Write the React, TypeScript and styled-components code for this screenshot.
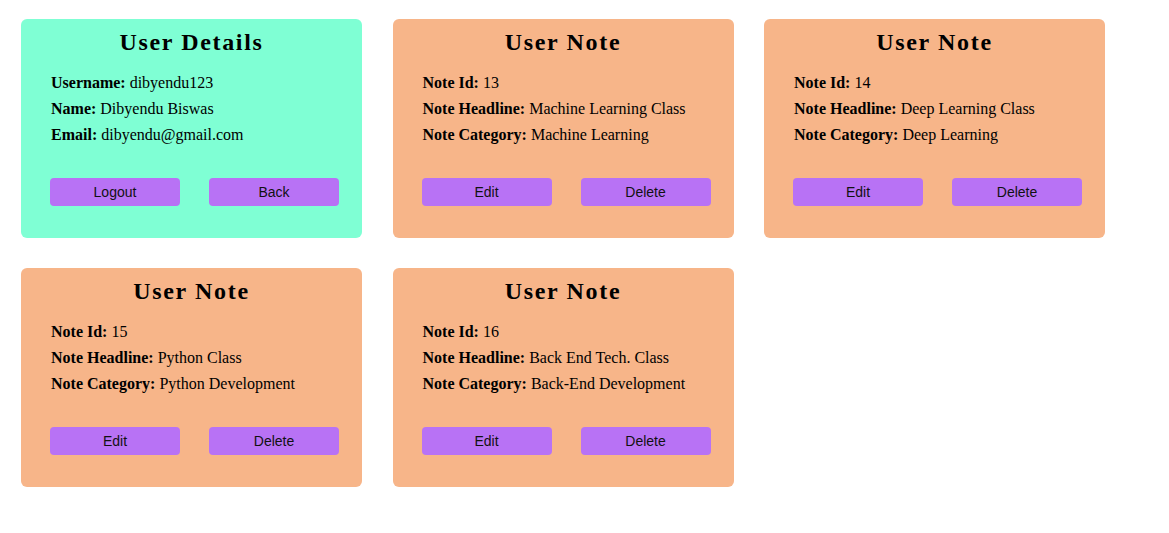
import React from "react";
import styled, { createGlobalStyle } from "styled-components";

const Global = createGlobalStyle`
  html, body { margin: 0; padding: 0; background: #ffffff; }
  body { font-family: "Liberation Serif", "Times New Roman", serif; color: #000; }
`;

const Grid = styled.div`
  display: grid;
  grid-template-columns: repeat(3, 341px);
  column-gap: 30.5px;
  row-gap: 30px;
  padding: 19px 21px;
`;

const Card = styled.div<{ $bg: string }>`
  background: ${(p) => p.$bg};
  border-radius: 6px;
  height: 219px;
  box-sizing: border-box;
  padding: 9.5px 0 0 0;
  display: flex;
  flex-direction: column;
`;

const Title = styled.h2`
  margin: 0;
  font-family: "Liberation Serif", "Times New Roman", serif;
  font-size: 24px;
  font-weight: bold;
  letter-spacing: 1.65px;
  text-align: center;
  line-height: 26.6px;
`;

const Rows = styled.div`
  display: flex;
  flex-direction: column;
  padding: 15.4px 0 0 30px;
`;

const Row = styled.div`
  font-size: 16px;
  line-height: 26px;
`;

const Label = styled.b`
  font-weight: bold;
`;

const Buttons = styled.div`
  display: flex;
  gap: 29px;
  padding: 29.4px 0 0 29px;
`;

const Btn = styled.button`
  width: 130px;
  height: 28px;
  border: none;
  border-radius: 4px;
  background: #b872f5;
  font-family: "Liberation Sans", Arial, sans-serif;
  font-size: 14px;
  color: #111;
  padding: 0;
  cursor: pointer;
`;

type Field = [string, string];

function InfoCard({ bg, title, fields, actions }: { bg: string; title: string; fields: Field[]; actions: string[] }) {
  return (
    <Card $bg={bg}>
      <Title>{title}</Title>
      <Rows>
        {fields.map(([k, v]) => (
          <Row key={k}>
            <Label>{k}:</Label> {v}
          </Row>
        ))}
      </Rows>
      <Buttons>
        {actions.map((a) => (
          <Btn key={a}>{a}</Btn>
        ))}
      </Buttons>
    </Card>
  );
}

const notes = [
  { id: "13", h: "Machine Learning Class", c: "Machine Learning" },
  { id: "14", h: "Deep Learning Class", c: "Deep Learning" },
  { id: "15", h: "Python Class", c: "Python Development" },
  { id: "16", h: "Back End Tech. Class", c: "Back-End Development" },
];

export default function App() {
  return (
    <>
      <Global />
      <Grid>
        <InfoCard
          bg="#7fffd4"
          title="User Details"
          fields={[
            ["Username", "dibyendu123"],
            ["Name", "Dibyendu Biswas"],
            ["Email", "dibyendu@gmail.com"],
          ]}
          actions={["Logout", "Back"]}
        />
        {notes.map((n) => (
          <InfoCard
            key={n.id}
            bg="#f7b589"
            title="User Note"
            fields={[
              ["Note Id", n.id],
              ["Note Headline", n.h],
              ["Note Category", n.c],
            ]}
            actions={["Edit", "Delete"]}
          />
        ))}
      </Grid>
    </>
  );
}
